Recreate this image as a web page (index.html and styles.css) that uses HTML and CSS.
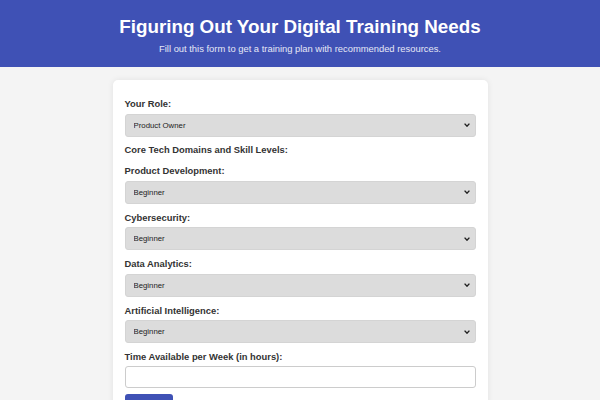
FILE: index.html
```html
<!DOCTYPE html>
<html lang="en">
<head>
<meta charset="utf-8">
<title>Digital Training Needs</title>
<link rel="stylesheet" href="styles.css">
</head>
<body>
<header class="hero">
  <h1 class="hero-title">Figuring Out Your Digital Training Needs</h1>
  <p class="hero-sub">Fill out this form to get a training plan with recommended resources.</p>
</header>
<main class="card">
  <form class="form">
    <label class="label" for="role">Your Role:</label>
    <select class="select" id="role">
      <option>Product Owner</option>
      <option>Developer</option>
      <option>Designer</option>
    </select>

    <div class="section-title">Core Tech Domains and Skill Levels:</div>

    <label class="label" for="pd">Product Development:</label>
    <select class="select" id="pd"><option>Beginner</option><option>Intermediate</option><option>Advanced</option></select>

    <label class="label" for="cs">Cybersecurity:</label>
    <select class="select" id="cs"><option>Beginner</option><option>Intermediate</option><option>Advanced</option></select>

    <label class="label" for="da">Data Analytics:</label>
    <select class="select" id="da"><option>Beginner</option><option>Intermediate</option><option>Advanced</option></select>

    <label class="label" for="ai">Artificial Intelligence:</label>
    <select class="select" id="ai"><option>Beginner</option><option>Intermediate</option><option>Advanced</option></select>

    <label class="label" for="time">Time Available per Week (in hours):</label>
    <input class="input" id="time" type="number">

    <button class="button" type="button">Submit</button>
  </form>
</main>
</body>
</html>
```
FILE: styles.css
```css
* { box-sizing: border-box; }
body {
  margin: 0;
  background: #f4f4f4;
  font-family: "Liberation Sans", Arial, sans-serif;
  color: #333;
}
.hero {
  background: #3f51b5;
  color: #fff;
  text-align: center;
  height: 67px;
  padding-top: 16px;
}
.hero-title {
  margin: 0;
  font-size: 18.8px;
  line-height: 22px;
  font-weight: bold;
}
.hero-sub {
  margin: 5px 0 0;
  font-size: 9.4px;
  line-height: 12px;
  color: #e6e8f5;
}
.card {
  width: 375px;
  margin: 13px auto 0;
  background: #fff;
  border-radius: 5px;
  box-shadow: 0 0 6px rgba(0,0,0,0.08);
  padding: 18px 12px 20px;
}
.form {
  display: flex;
  flex-direction: column;
}
.label, .section-title {
  display: block;
  font-size: 9.4px;
  font-weight: bold;
  line-height: 11px;
  margin-bottom: 4.5px;
}
.section-title {
  margin-bottom: 10px;
}
.select {
  -webkit-appearance: none;
  appearance: none;
  height: 23px;
  width: 100%;
  background-color: #dcdcdc;
  background-image: url("data:image/svg+xml,%3Csvg xmlns='http://www.w3.org/2000/svg' width='6' height='4' viewBox='0 0 6 4'%3E%3Cpath d='M0.6 0.6 L3 3.2 L5.4 0.6' fill='none' stroke='%23222' stroke-width='1.4'/%3E%3C/svg%3E");
  background-repeat: no-repeat;
  background-position: right 5px center;
  background-size: 6px 4px;
  border: 1px solid #d4d4d4;
  border-radius: 3px;
  font-family: "Liberation Sans", Arial, sans-serif;
  font-size: 7.8px;
  color: #222;
  padding: 0 8px;
  margin-bottom: 7.9px;
}
.input {
  height: 22px;
  width: 100%;
  background: #fff;
  border: 1px solid #ccc;
  border-radius: 3px;
  margin-bottom: 6px;
}
.button {
  align-self: flex-start;
  width: 48px;
  height: 22px;
  background: #3f51b5;
  color: #fff;
  border: none;
  border-radius: 3px;
  font-size: 9px;
  font-family: "Liberation Sans", Arial, sans-serif;
}
```
